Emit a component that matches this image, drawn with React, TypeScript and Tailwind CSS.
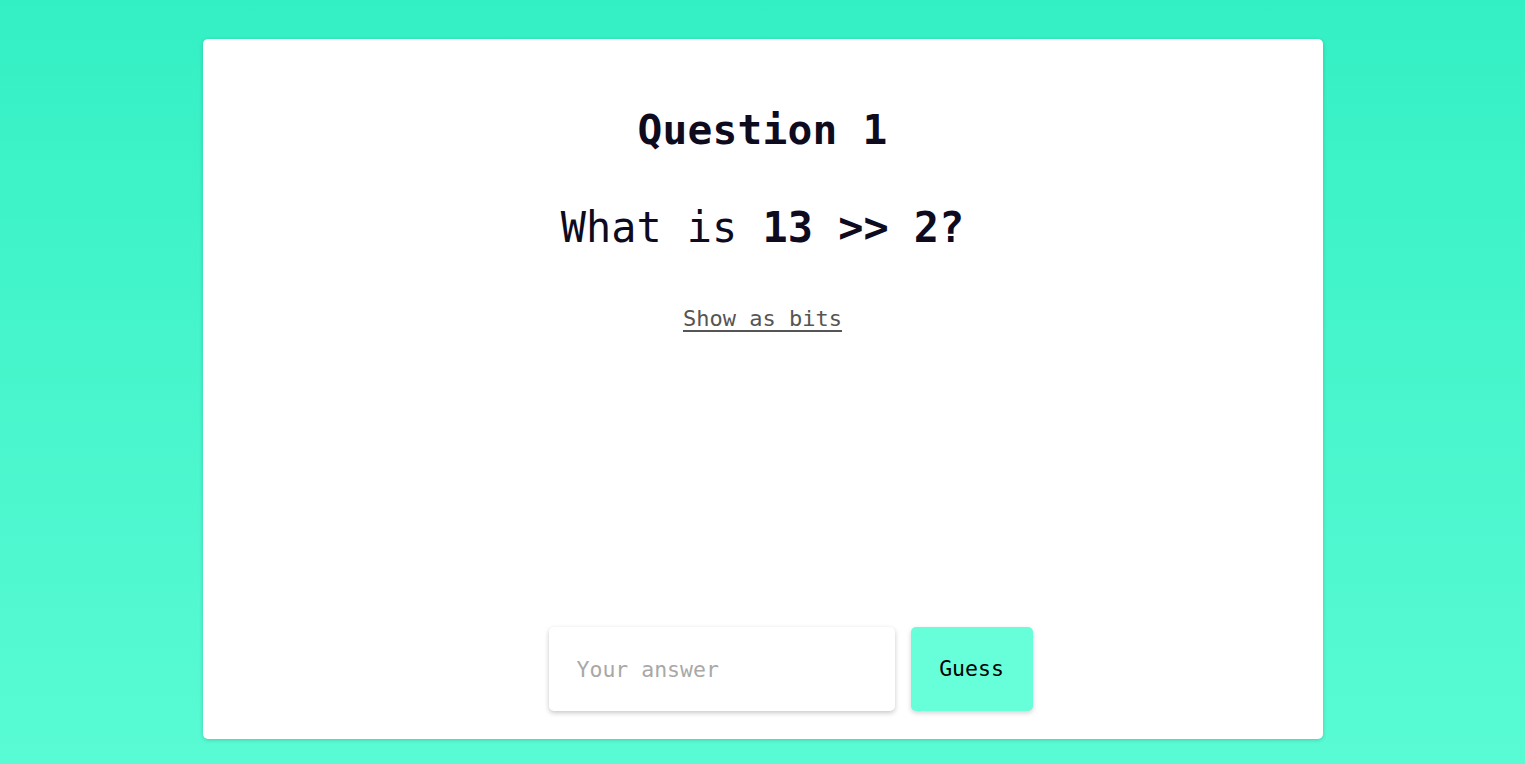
import { useState } from "react";

// Mono font stack; Roboto Mono isn't installed, DejaVu Sans Mono is the closest match
const MONO = "font-['DejaVu_Sans_Mono','Liberation_Mono',monospace]";

export default function App() {
  const [answer, setAnswer] = useState("");

  return (
    <div className={`min-h-screen w-full bg-gradient-to-b from-[#33f0c4] to-[#58fbd4] pt-[39px] ${MONO}`}>
      <div className="mx-auto flex h-[700px] w-[1120px] flex-col items-center rounded-[5px] bg-white pt-[66px] pb-[28px] shadow-[0_1px_4px_rgba(0,0,0,0.18)]">
        <h1 className="text-[41.2px] leading-[50px] font-bold tracking-[0.2px] text-[#0e0b1f]">Question 1</h1>

        <p className="mt-[48px] text-[41.9px] leading-[50px] text-[#0e0b1f]">
          What is <span className="font-bold">13 &gt;&gt; 2?</span>
        </p>

        <button className="mt-[52px] text-[22px] leading-[28px] text-[#555555] underline underline-offset-[4px] decoration-[1.5px]">
          Show as bits
        </button>

        {/* the form sits a little right of centre in the original */}
        <form
          className="mt-auto ml-[56px] flex gap-[16px]"
          onSubmit={(e) => e.preventDefault()}
        >
          <input
            value={answer}
            onChange={(e) => setAnswer(e.target.value)}
            placeholder="Your answer"
            className="h-[84px] w-[346px] rounded-[5px] bg-white px-[28px] text-[21.5px] text-[#0e0b1f] outline-none placeholder:text-[#a8a8a8] shadow-[0_2px_5px_rgba(0,0,0,0.22)]"
          />
          <button
            type="submit"
            className="h-[84px] w-[122px] rounded-[5px] bg-[#66ffd9] text-[21.5px] text-black shadow-[0_2px_5px_rgba(0,0,0,0.18)]"
          >
            Guess
          </button>
        </form>
      </div>
    </div>
  );
}
